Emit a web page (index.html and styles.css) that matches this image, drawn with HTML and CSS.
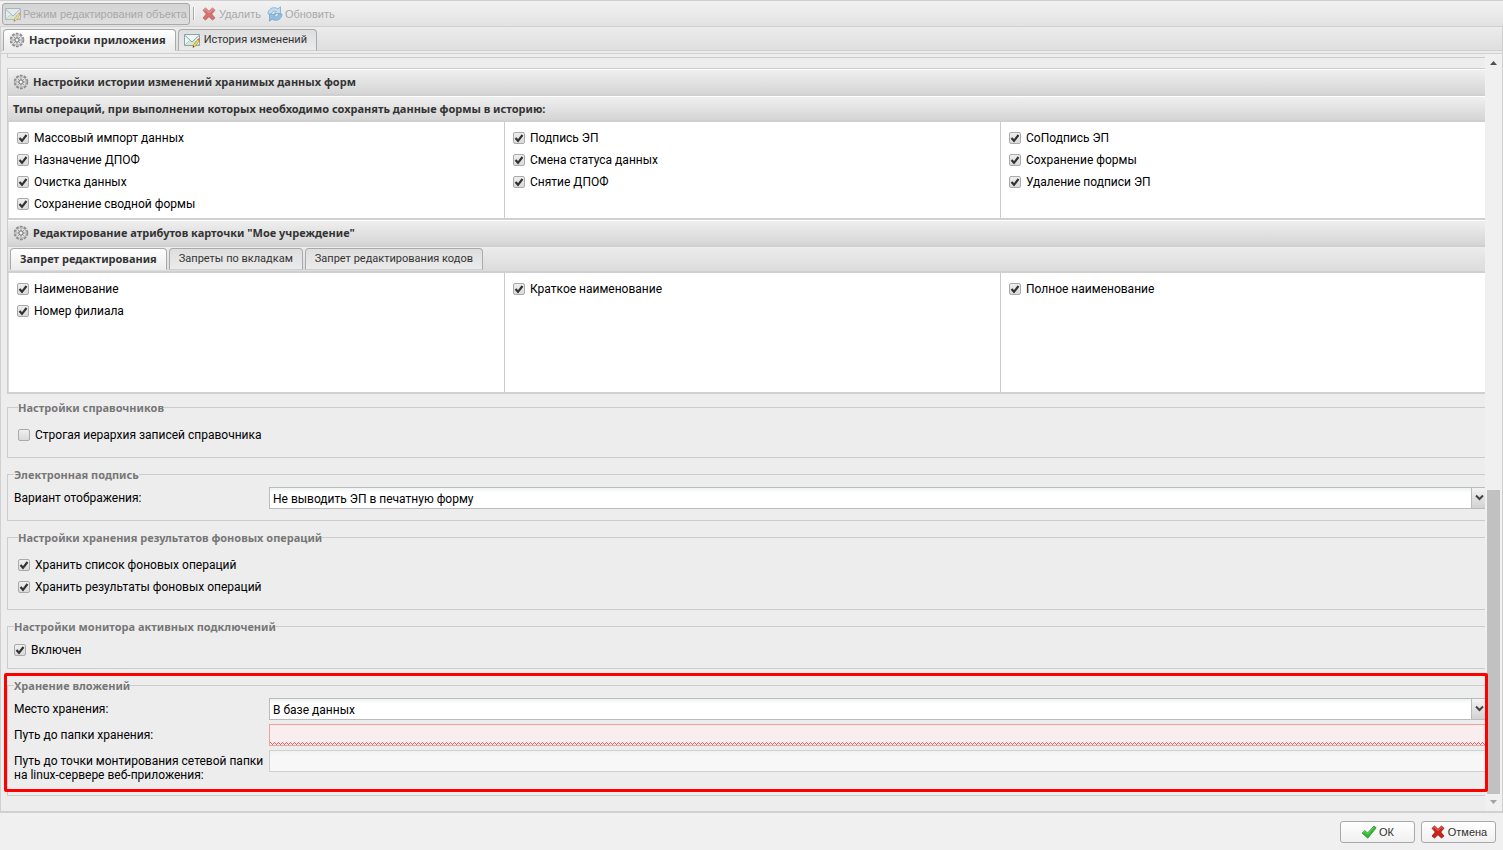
FILE: index.html
```html
<!DOCTYPE html>
<html lang="ru">
<head>
  <meta charset="UTF-8" />
  <meta name="viewport" content="width=device-width, initial-scale=1.0" />
  <title>Настройки приложения</title>
  <link rel="stylesheet" href="styles.css">
</head>
<body>

<!-- Icon set -->
<svg class="sprite" aria-hidden="true">
  <symbol id="mail" viewBox="0 0 16 16">
    <path d="M.5 2.500h15v11H.5z" fill="#eef7f4" stroke="#8aa3ad"/>
    <path d="M1 13l5-4.500 2 1.500 2-1.500 5 4.500z" fill="#d3ead0"/>
    <path d="M1 3.500l7 6.500 7-6.500" fill="none" stroke="#7ba4b4"/>
    <path d="M1 13l4.500-4.500M15 13l-4.500-4.500" fill="none" stroke="#a5c8a8" stroke-width=".8"/>
    <path d="M9.500 13l4-5.500 1.800 1.200-4 5.500-2.300 1.300z" fill="#f9dc55" stroke="#a77a25" stroke-width=".6"/>
    <path d="M13.500 7.500l1-1.300 1.500 1.200-.9 1.300z" fill="#e0604f"/>
    <path d="M9.200 13.800l.9.700-1.300 1z" fill="#222"/>
  </symbol>
  <symbol id="gear" viewBox="0 0 16 16">
    <circle cx="8" cy="8" r="6.300" fill="none" stroke="#8c8c8c" stroke-width="2" stroke-dasharray="2.800 1.158"/>
    <circle cx="8" cy="8" r="5.200" fill="#e2e2e2" stroke="#b5b5b5" stroke-width="1"/>
    <path d="M8 3.500v9M3.500 8h9M4.800 4.800l6.400 6.400M11.200 4.800l-6.400 6.400" stroke="#999" stroke-width=".9"/>
    <circle cx="8" cy="8" r="2.200" fill="#d5d5d5" stroke="#777"/>
    <circle cx="8" cy="8" r=".9" fill="#fff"/>
  </symbol>
  <symbol id="cross" viewBox="0 0 16 16">
    <path d="M2 4.300L4.500 2 8 5.300 11.500 2 14 4.300 10.700 8l3.300 4-2.500 2L8 10.700 4.500 14 2 12l3.300-4z" fill="#d0201c" stroke="#8e1512" stroke-width=".8"/>
    <path d="M3.200 4.300l1.300-1L8 6.500l3.500-3.200 1.200 1" fill="none" stroke="#ee7770"/>
  </symbol>
  <symbol id="refresh" viewBox="0 0 16 16">
    <path d="M1 8C1 3 6 0 11 2.800L13.500.8V7.500H7.200l2-2C7 4.500 4.800 5.500 4.500 8z" fill="#a5d3f5" stroke="#2f7fc2" stroke-width=".8"/>
    <path d="M15 8c0 5-5 8-10 5.200L2.500 15.200V8.500h6.300l-2 2c2.200 1 4.400 0 4.700-2.500z" fill="#5aa7e2" stroke="#2774b8" stroke-width=".8"/>
  </symbol>
  <symbol id="tick" viewBox="0 0 16 16">
    <path d="M1 9l3-2.500L6.500 9 13 2l2.200 1.800L6.800 14.200z" fill="#2fb92f" stroke="#218a25" stroke-width=".7"/>
    <path d="M2.300 8.800L4 7.500l2.500 2.700L13 3.200" fill="none" stroke="#7fe07a" stroke-width=".8"/>
  </symbol>
</svg>

<div class="window">
  <div class="toolbar">
    <button class="tool pressed" disabled><svg class="icon"><use href="#mail"/></svg>Режим редактирования объекта</button>
    <span class="separator"></span>
    <button class="tool" disabled><svg class="icon"><use href="#cross"/></svg>Удалить</button>
    <button class="tool" disabled><svg class="icon"><use href="#refresh"/></svg>Обновить</button>
  </div>

  <div class="tabs main-tabs" role="tablist">
    <button class="tab active" role="tab" aria-selected="true"><svg class="icon"><use href="#gear"/></svg>Настройки приложения</button>
    <button class="tab" role="tab"><svg class="icon"><use href="#mail"/></svg>История изменений</button>
  </div>

  <div class="panel">
    <div class="content">
      <div class="previous"></div>

      <section class="box">
        <h2 class="box-header"><svg class="icon"><use href="#gear"/></svg>Настройки истории изменений хранимых данных форм</h2>
        <h3 class="box-header sub">Типы операций, при выполнении которых необходимо сохранять данные формы в историю:</h3>
        <div class="columns">
          <div class="column">
            <label class="check"><input type="checkbox" checked>Массовый импорт данных</label>
            <label class="check"><input type="checkbox" checked>Назначение ДПОФ</label>
            <label class="check"><input type="checkbox" checked>Очистка данных</label>
            <label class="check"><input type="checkbox" checked>Сохранение сводной формы</label>
          </div>
          <div class="column">
            <label class="check"><input type="checkbox" checked>Подпись ЭП</label>
            <label class="check"><input type="checkbox" checked>Смена статуса данных</label>
            <label class="check"><input type="checkbox" checked>Снятие ДПОФ</label>
          </div>
          <div class="column">
            <label class="check"><input type="checkbox" checked>СоПодпись ЭП</label>
            <label class="check"><input type="checkbox" checked>Сохранение формы</label>
            <label class="check"><input type="checkbox" checked>Удаление подписи ЭП</label>
          </div>
        </div>

        <h2 class="box-header"><svg class="icon"><use href="#gear"/></svg>Редактирование атрибутов карточки "Мое учреждение"</h2>
        <div class="tabs inner-tabs" role="tablist">
          <button class="tab active" role="tab" aria-selected="true">Запрет редактирования</button>
          <button class="tab" role="tab">Запреты по вкладкам</button>
          <button class="tab" role="tab">Запрет редактирования кодов</button>
        </div>
        <div class="columns tall">
          <div class="column">
            <label class="check"><input type="checkbox" checked>Наименование</label>
            <label class="check"><input type="checkbox" checked>Номер филиала</label>
          </div>
          <div class="column">
            <label class="check"><input type="checkbox" checked>Краткое наименование</label>
          </div>
          <div class="column">
            <label class="check"><input type="checkbox" checked>Полное наименование</label>
          </div>
        </div>
      </section>

      <fieldset class="group roomy">
        <legend>Настройки справочников</legend>
        <label class="check"><input type="checkbox">Строгая иерархия записей справочника</label>
      </fieldset>

      <fieldset class="group">
        <legend>Электронная подпись</legend>
        <div class="field">
          <label for="signView">Вариант отображения:</label>
          <select id="signView">
            <option>Не выводить ЭП в печатную форму</option>
          </select>
        </div>
      </fieldset>

      <fieldset class="group roomy">
        <legend>Настройки хранения результатов фоновых операций</legend>
        <label class="check"><input type="checkbox" checked>Хранить список фоновых операций</label>
        <label class="check"><input type="checkbox" checked>Хранить результаты фоновых операций</label>
      </fieldset>

      <fieldset class="group">
        <legend>Настройки монитора активных подключений</legend>
        <label class="check"><input type="checkbox" checked>Включен</label>
      </fieldset>

      <div class="attachments">
        <fieldset class="group">
          <legend>Хранение вложений</legend>
          <div class="field">
            <label for="storage">Место хранения:</label>
            <select id="storage">
              <option>В базе данных</option>
            </select>
          </div>
          <div class="field">
            <label for="folderPath">Путь до папки хранения:</label>
            <input type="text" id="folderPath" class="invalid">
          </div>
          <div class="field">
            <label for="mountPath">Путь до точки монтирования сетевой папки на linux-сервере веб-приложения:</label>
            <input type="text" id="mountPath" disabled>
          </div>
        </fieldset>
        <div class="highlight"></div>
      </div>
    </div>

    <div class="scrollbar">
      <span class="arrow up"></span>
      <span class="track"><span class="thumb"></span></span>
      <span class="arrow down"></span>
    </div>
  </div>

  <div class="footer">
    <button class="btn"><svg class="icon"><use href="#tick"/></svg>ОК</button>
    <button class="btn"><svg class="icon"><use href="#cross"/></svg>Отмена</button>
  </div>
</div>

</body>
</html>
```
FILE: styles.css
```css
* {
  box-sizing: border-box;
}

body {
  margin: 0;
  font-family: Roboto, "Noto Sans", sans-serif;
  font-size: 12px;
  line-height: 14px;
  color: #000;
  background: #f0f0f0;
}

button,
input,
select {
  font: inherit;
  color: inherit;
  margin: 0;
}

.sprite {
  position: absolute;
  width: 0;
  height: 0;
}

.icon {
  width: 16px;
  height: 16px;
  flex: none;
}

.window {
  display: flex;
  flex-direction: column;
  height: 100vh;
  overflow: hidden;
}

/* Toolbar */
.toolbar {
  display: flex;
  align-items: center;
  height: 27px;
  padding: 0 2px;
  border-top: 1px solid #d0d0d0;
  border-bottom: 1px solid #d0d0d0;
  background: linear-gradient(#f2f2f2, #e2e2e2);
}

.tool {
  display: flex;
  align-items: center;
  height: 22px;
  padding: 0 3px;
  gap: 2px;
  border: 0;
  background: none;
  font-family: "Liberation Sans", Arial, sans-serif;
  font-size: 11px;
  color: #a8a8a8;
}

.tool .icon {
  opacity: 0.6;
}

.tool.pressed {
  padding: 0 2px;
  border: 1px solid #a9a9a9;
  border-radius: 3px;
  background: linear-gradient(#d4d4d4, #dedede);
}

.separator {
  width: 2px;
  height: 13px;
  margin: 0 3px;
  border-left: 1px solid #a9a9a9;
  border-right: 1px solid #fff;
}

/* Tabs */
.tabs {
  display: flex;
  gap: 2px;
  background: linear-gradient(#ececec, #dcdcdc);
}

.main-tabs {
  height: 27px;
  padding: 2px 2px 0;
  border-left: 1px solid #d0d0d0;
  border-right: 1px solid #d0d0d0;
  box-shadow: inset 0 -1px #d0d0d0, inset 0 -3px #ececec, inset 0 -4px #d0d0d0;
}

.inner-tabs {
  height: 26px;
  padding: 1px 2px 0;
  border-bottom: 2px solid #d0d0d0;
}

.tab {
  display: flex;
  align-items: center;
  height: 22px;
  padding: 0 9px;
  gap: 4px;
  border: 1px solid #a9a9a9;
  border-bottom-color: #d0d0d0;
  border-radius: 4px 4px 0 0;
  background: linear-gradient(#dedede, #ebebeb);
  font-size: 11px;
  color: #333;
  white-space: nowrap;
}

.main-tabs .tab {
  padding: 0 9px 0 5px;
}

.tab.active {
  border-bottom-color: #ececec;
  background: linear-gradient(#fff, #ececec);
  font-family: "Noto Sans", sans-serif;
  font-weight: bold;
}

/* Panel */
.panel {
  display: flex;
  flex: 1;
  min-height: 0;
  overflow: hidden;
  border: 1px solid #d0d0d0;
  border-top: 0;
  border-bottom-width: 2px;
  background: #ededed;
}

/* the form is slightly wider than the visible area */
.content {
  flex: 1;
  min-width: 0;
  margin-right: -11px;
  padding-left: 6px;
}

.previous {
  height: 4px;
  margin-bottom: 10px;
  border-left: 1px solid #ccc;
  border-bottom: 1px solid #ccc;
}

.box {
  border-top: 1px solid #ccc;
  border-left: 1px solid #ccc;
}

.box-header {
  display: flex;
  align-items: center;
  height: 27px;
  margin: 0;
  padding: 0 5px;
  gap: 4px;
  border-top: 1px solid #fff;
  border-bottom: 2px solid #d0d0d0;
  background: linear-gradient(#efefef, #d5d5d5);
  font-family: "Noto Sans", sans-serif;
  font-size: 11px;
  color: #333;
}

.box-header.sub {
  height: 26px;
}

.columns {
  display: grid;
  grid-template-columns: repeat(3, 1fr);
  border-bottom: 2px solid #d0d0d0;
  background: #fff;
}

.columns.tall {
  min-height: 121px;
}

.column {
  padding: 5px 8px 3px;
  border-left: 1px solid #ccc;
}

.column:first-child {
  border-left-color: #ddd;
}

.check {
  display: flex;
  align-items: center;
  height: 22px;
  gap: 5px;
}

.check input {
  appearance: none;
  width: 12px;
  height: 12px;
  border: 1px solid #aaa;
  border-radius: 2px;
  background: linear-gradient(#efefef, #dadada);
}

.check input:checked {
  background: url("data:image/svg+xml,%3Csvg xmlns='http://www.w3.org/2000/svg' viewBox='0 0 10 10'%3E%3Cpath d='M1.500 5l2.500 2.800L8.500 2' fill='none' stroke='%23333' stroke-width='2.200'/%3E%3C/svg%3E"), linear-gradient(#efefef, #dadada);
}

/* Field groups */
.group {
  min-width: 0;
  margin: 0 0 10px;
  padding: 6px 6px 7px;
  border: 1px solid #ccc;
}

.group.roomy {
  padding: 10px 10px 11px;
}

.box + .group {
  margin-top: 7px;
}

.group legend {
  height: 13px;
  padding: 0;
  font-family: "Noto Sans", sans-serif;
  font-size: 11px;
  font-weight: bold;
  color: #777;
}

.field {
  display: flex;
  align-items: flex-start;
  margin-bottom: 4px;
}

.field label {
  width: 250px;
  margin-right: 5px;
  padding-top: 4px;
  flex: none;
}

.field select,
.field input {
  appearance: none;
  flex: 1;
  min-width: 0;
  height: 22px;
  padding: 1px 3px 0;
  border: 1px solid #bbb;
  border-radius: 0;
  background: linear-gradient(#f0f3f3, #fff 5px);
}

.field select {
  background:
    url("data:image/svg+xml,%3Csvg xmlns='http://www.w3.org/2000/svg' width='17' height='20'%3E%3ClinearGradient id='g' x2='0' y2='1'%3E%3Cstop stop-color='%23f3f3f3'/%3E%3Cstop offset='1' stop-color='%23d2d2d2'/%3E%3C/linearGradient%3E%3Cpath fill='url(%23g)' d='M0 0h17v20H0z'/%3E%3Cpath d='M.5 0v20' stroke='%23bbb'/%3E%3Cpath d='M5 7.500l3.500 3.500L12 7.500' fill='none' stroke='%23444' stroke-width='2'/%3E%3C/svg%3E") right / 17px 20px no-repeat,
    linear-gradient(#f0f3f3, #fff 5px);
}

.field input.invalid {
  border-color: #f0a0a0;
  background: url("data:image/svg+xml,%3Csvg xmlns='http://www.w3.org/2000/svg' width='4' height='3'%3E%3Cpath d='M0 0h1v1H0zM1 1h1v1H1zM2 2h1v1H2zM3 1h1v1H3z' fill='%23e46464'/%3E%3C/svg%3E") left bottom repeat-x, #f9eded;
}

.field input:disabled {
  border-color: #d0d0d0;
  background: linear-gradient(#f0f3f3, #f7f7f7 5px);
}

.attachments {
  position: relative;
}

.attachments .group {
  margin: 0;
  padding-bottom: 9px;
}

/* red frame around the attachment settings */
.highlight {
  position: absolute;
  z-index: 2;
  top: -6px;
  right: 8px;
  bottom: 4px;
  left: -3px;
  border: 3px solid #f00;
  border-radius: 2px;
  pointer-events: none;
}

/* Scrollbar */
.scrollbar {
  position: relative;
  z-index: 1;
  display: flex;
  flex-direction: column;
  align-items: center;
  width: 17px;
  flex: none;
  background: #f0f0f0;
}

.arrow {
  width: 7px;
  height: 4px;
  margin: 7px 0 6px;
  background: #505050;
  clip-path: polygon(50% 0, 100% 100%, 0 100%);
}

.arrow.down {
  margin: 6px 0 7px;
  background: #a3a3a3;
  clip-path: polygon(0 0, 100% 0, 50% 100%);
}

.track {
  display: flex;
  flex: 1;
  flex-direction: column;
  justify-content: flex-end;
}

.thumb {
  width: 13px;
  height: 42%;
  background: #c1c1c1;
}

/* Footer */
.footer {
  display: flex;
  justify-content: flex-end;
  align-items: center;
  height: 37px;
  padding: 1px 7px 0;
  gap: 6px;
}

.btn {
  display: flex;
  align-items: center;
  justify-content: center;
  width: 75px;
  height: 22px;
  padding: 0;
  gap: 2px;
  border: 1px solid #a9a9a9;
  border-radius: 3px;
  background: linear-gradient(#fff, #f0f0f0);
  font-family: "Liberation Sans", Arial, sans-serif;
  font-size: 11px;
  color: #333;
}
```
